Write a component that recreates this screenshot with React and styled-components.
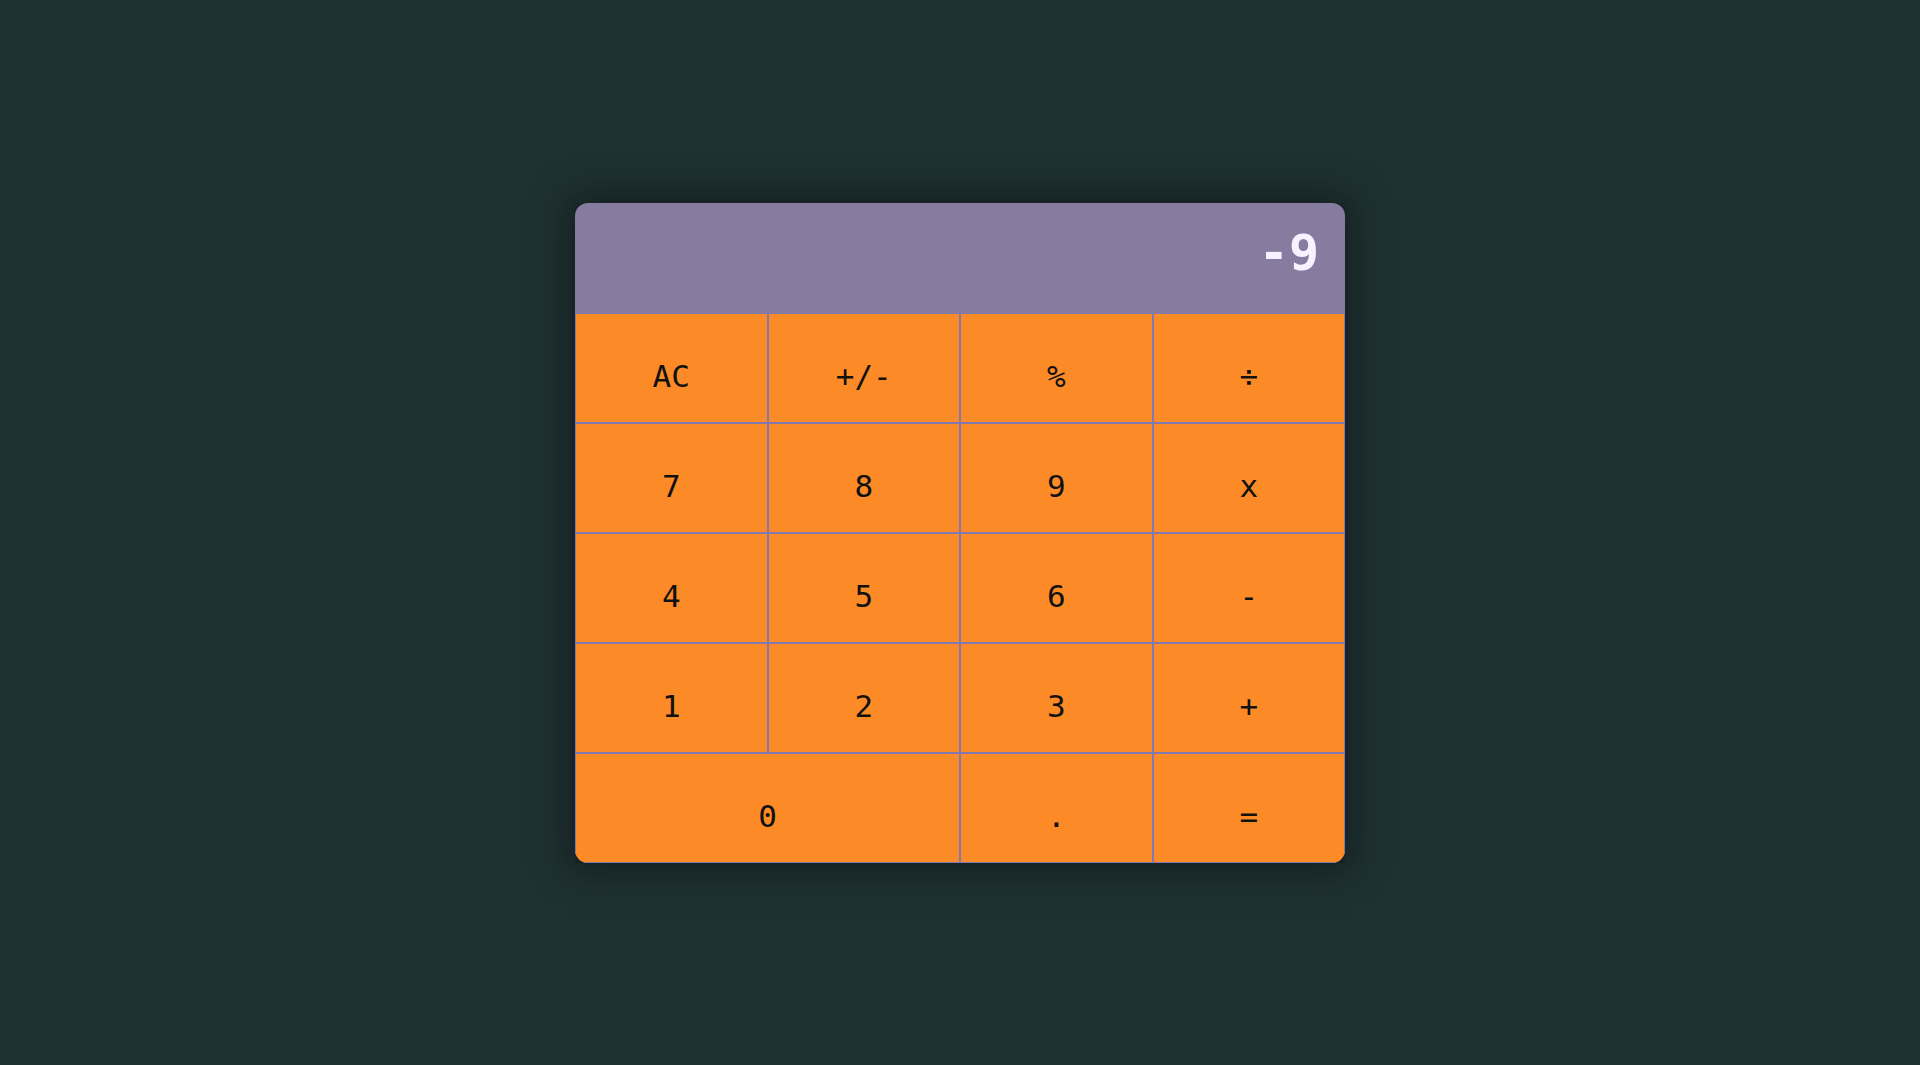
import React, { useState } from 'react';
import styled, { createGlobalStyle } from 'styled-components';

const GlobalStyle = createGlobalStyle`
  html, body {
    margin: 0;
    padding: 0;
    background: #1f3131;
  }
  #root {
    min-height: 100vh;
  }
`;

const Page = styled.div`
  height: 100vh;
  display: flex;
  align-items: center;
  justify-content: center;
`;

const Shell = styled.div`
  width: 770px;
  background: #182328;
  box-shadow: 0 0 34px 6px rgba(10, 14, 18, 0.55);
`;

const Body = styled.div`
  border-radius: 13px;
  overflow: hidden;
`;

const Screen = styled.div`
  height: 110px;
  background: #877ca0;
  display: flex;
  align-items: center;
  justify-content: flex-end;
  padding: 0 26px 10px;
  box-sizing: border-box;
  color: #f6f2ff;
  font-family: "DejaVu Sans Mono", "Liberation Mono", monospace;
  font-weight: bold;
  font-size: 50px;
`;

const Keys = styled.div`
  display: grid;
  grid-template-columns: repeat(4, 1fr);
  grid-auto-rows: 110px;
`;

const Key = styled.button`
  grid-column: span ${p => p.span || 1};
  border: 1px solid #8079b2;
  background: #fb8a27;
  color: #111;
  font-family: "DejaVu Sans Mono", "Liberation Mono", monospace;
  font-size: 31px;
  padding: 16px 0 0;
  margin: 0;
  cursor: pointer;
  outline: none;
`;

const keys = [
  { label: 'AC' },
  { label: '+/-' },
  { label: '%' },
  { label: '÷' },
  { label: '7' },
  { label: '8' },
  { label: '9' },
  { label: 'x' },
  { label: '4' },
  { label: '5' },
  { label: '6' },
  { label: '-' },
  { label: '1' },
  { label: '2' },
  { label: '3' },
  { label: '+' },
  { label: '0', span: 2 },
  { label: '.' },
  { label: '=' }
];

const App = () => {
  const [value] = useState('-9');

  return (
    <>
      <GlobalStyle />
      <Page>
        <Shell>
          <Body>
            <Screen>{value}</Screen>
            <Keys>
              {keys.map(k => (
                <Key key={k.label} span={k.span}>
                  {k.label}
                </Key>
              ))}
            </Keys>
          </Body>
        </Shell>
      </Page>
    </>
  );
};

export default App;
